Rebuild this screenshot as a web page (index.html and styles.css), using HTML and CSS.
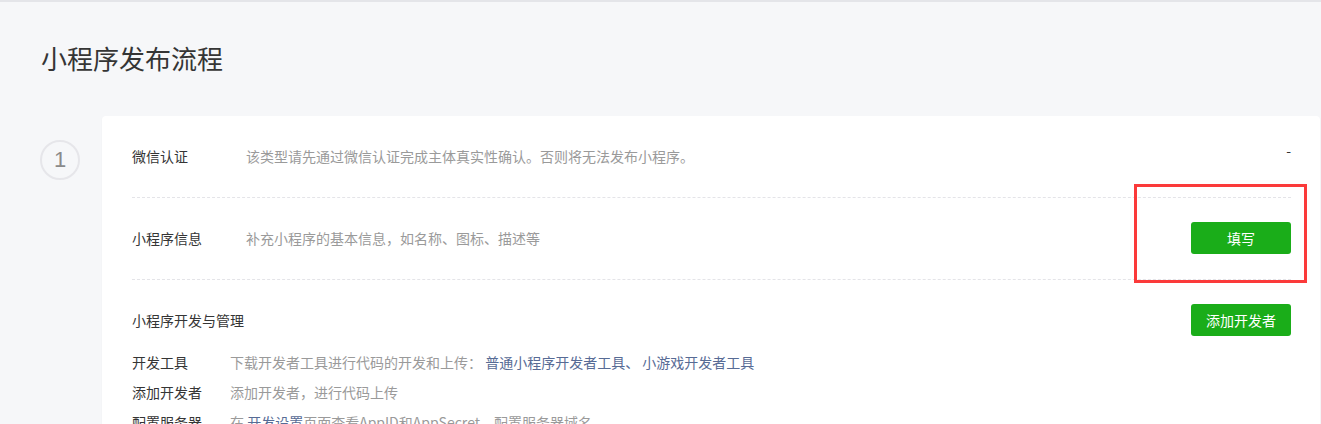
FILE: index.html
```html
<!DOCTYPE html>
<html lang="zh-CN">
<head>
<meta charset="utf-8">
<title>小程序发布流程</title>
<link rel="stylesheet" href="styles.css">
</head>
<body>
<div class="topbar"></div>
<main class="page">
  <h2 class="title">小程序发布流程</h2>
  <section class="step">
    <div class="step-num">1</div>
    <div class="card">
      <div class="row">
        <div class="label">微信认证</div>
        <div class="desc">该类型请先通过微信认证完成主体真实性确认。否则将无法发布小程序。</div>
        <div class="action"><span class="dash">-</span></div>
      </div>
      <div class="row highlight">
        <div class="label">小程序信息</div>
        <div class="desc">补充小程序的基本信息，如名称、图标、描述等</div>
        <div class="action"><button class="btn">填写</button></div>
        <div class="mark"></div>
      </div>
      <div class="row last">
        <div class="row-head">
          <div class="label wide">小程序开发与管理</div>
          <div class="action"><button class="btn">添加开发者</button></div>
        </div>
        <ul class="subs">
          <li><span class="sublabel">开发工具</span><span class="desc">下载开发者工具进行代码的开发和上传： <a class="link">普通小程序开发者工具、</a> <a class="link">小游戏开发者工具</a></span></li>
          <li><span class="sublabel">添加开发者</span><span class="desc">添加开发者，进行代码上传</span></li>
          <li><span class="sublabel">配置服务器</span><span class="desc">在 <a class="link">开发设置</a>页面查看AppID和AppSecret，配置服务器域名。</span></li>
        </ul>
      </div>
    </div>
  </section>
</main>
</body>
</html>
```
FILE: styles.css
```css
html, body {
  margin: 0;
  padding: 0;
  height: 424px;
  overflow: hidden;
}
body {
  background: #f6f7f9;
  font-family: "Noto Sans CJK SC", "Microsoft YaHei", "Liberation Sans", sans-serif;
  color: #353535;
  font-size: 14px;
}
.topbar {
  height: 2px;
  background: #e4e5e9;
}
.page {
  padding: 38px 1px 0 40px;
}
.title {
  margin: 0 0 40px 1px;
  font-size: 26px;
  font-weight: normal;
  line-height: 36px;
  color: #353535;
}
.step {
  display: flex;
  align-items: flex-start;
  gap: 22px;
}
.step-num {
  flex: none;
  width: 36px;
  height: 36px;
  margin-top: 24px;
  border: 2px solid #e6e6ea;
  border-radius: 50%;
  color: #8a8a8a;
  font-family: "Liberation Sans", sans-serif;
  font-size: 22px;
  line-height: 36px;
  text-align: center;
}
.card {
  flex: 1;
  background: #fff;
  border-radius: 4px;
  box-shadow: 0 1px 2px rgba(0, 0, 0, 0.04);
  padding: 0 29px 0 30px;
}
.row {
  position: relative;
  display: flex;
  align-items: center;
  padding: 24px 0 25px;
  border-bottom: 1px dashed #e4e4e8;
  min-height: 32px;
}
.row.last {
  display: block;
  border-bottom: none;
}
.row-head {
  display: flex;
  align-items: center;
  height: 32px;
}
.label {
  flex: none;
  width: 114px;
  line-height: 32px;
}
.label.wide {
  width: auto;
  flex: 1;
}
.desc {
  flex: 1;
  color: #9a9a9a;
}
.action {
  flex: none;
  display: flex;
  justify-content: flex-end;
  align-items: center;
}
.dash {
  display: block;
  line-height: 32px;
  margin-top: -12px;
  color: #353535;
}
.btn {
  width: 100px;
  height: 32px;
  border: none;
  border-radius: 3px;
  background: #1aad19;
  color: #fff;
  font-family: inherit;
  font-size: 14px;
  padding: 0;
  cursor: pointer;
}
.mark {
  position: absolute;
  top: -14px;
  right: -16px;
  width: 167px;
  height: 93px;
  border: 3px solid #fb3a3a;
}
.subs {
  list-style: none;
  margin: 11px 0 0;
  padding: 0;
}
.subs li {
  display: flex;
  line-height: 30px;
}
.sublabel {
  flex: none;
  width: 98px;
}
.link {
  color: #576b95;
  text-decoration: none;
}
```
